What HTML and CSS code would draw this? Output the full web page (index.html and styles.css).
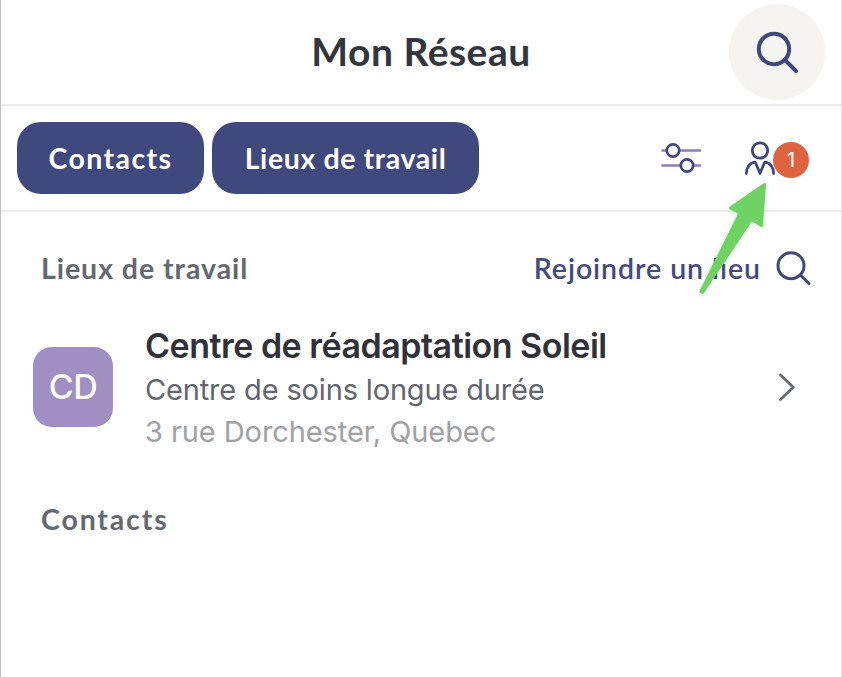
FILE: index.html
```html
<!DOCTYPE html>
<html lang="fr">
<head>
<meta charset="utf-8">
<title>Mon Réseau</title>
<link rel="stylesheet" href="styles.css">
</head>
<body>
<main class="screen">
  <header class="topbar">
    <h1 class="title">Mon Réseau</h1>
    <button class="round-search" aria-label="Rechercher">
      <svg width="44" height="44" viewBox="755 30 44 44" fill="none" stroke="#3f487c" stroke-width="4" stroke-linecap="round"><circle cx="774" cy="49" r="15.2"/><path d="M785.5 60.5 796 71"/></svg>
    </button>
  </header>
  <nav class="filters">
    <button class="pill pill-contacts"><span class="pill-text-a">Contacts</span></button>
    <button class="pill pill-places"><span class="pill-text-b">Lieux de travail</span></button>
    <svg class="sliders" width="42" height="34" viewBox="660 141 42 34" fill="none" stroke-width="2.7" stroke-linecap="round">
      <path stroke="#8b7fb5" d="M662.5 150.5H700M662.5 165.5H700"/>
      <circle cx="673" cy="150.500" r="6.200" stroke="#3f487c" fill="#fff"/>
      <circle cx="687" cy="165.500" r="6.200" stroke="#3f487c" fill="#fff"/>
    </svg>
    <div class="people">
      <svg class="person" width="34" height="40" viewBox="744 139 34 40" fill="none" stroke="#3f487c" stroke-width="2.8" stroke-linecap="round" stroke-linejoin="round"><circle cx="760" cy="150.500" r="7.700"/><path d="M746.400 173.500C746.400 167 750 162.600 755.300 162.200L760 173.200 764.700 162.200C770 162.600 773.600 167 773.600 173.500"/></svg>
      <span class="badge">1</span>
    </div>
  </nav>
  <section class="content">
    <div class="section-head">
      <h2 class="label label-places">Lieux de travail</h2>
      <a class="join"><span>Rejoindre un lieu</span>
        <svg width="38" height="38" viewBox="775 250 38 38" fill="none" stroke="#3f487c" stroke-width="3" stroke-linecap="round"><circle cx="791" cy="265.700" r="13"/><path d="M800.500 275.200 809 283.500"/></svg>
      </a>
    </div>
    <article class="place">
      <div class="avatar">CD</div>
      <div class="details">
        <h3 class="name">Centre de réadaptation Soleil</h3>
        <p class="kind">Centre de soins longue durée</p>
        <p class="address">3 rue Dorchester, Quebec</p>
      </div>
      <svg class="chevron" width="20" height="32" viewBox="777 371 20 32" fill="none" stroke="#676b70" stroke-width="2.800" stroke-linecap="round" stroke-linejoin="round"><path d="M780.500 375 793.300 387.200 780.500 399.500"/></svg>
    </article>
    <h2 class="label label-contacts">Contacts</h2>
  </section>
  <svg class="arrow" width="90" height="126" viewBox="690 175 90 126"><path fill="#6fd364" stroke="#6fd364" stroke-width="3" stroke-linejoin="round" d="M764.500 184.500 730.500 208 740 212.800 701 291.500 702.500 292.500 751.500 219.500 761.500 225.500Z"/></svg>
</main>
</body>
</html>
```
FILE: styles.css
```css
* { box-sizing: border-box; margin: 0; }
body { background: #fff; }
button { border: 0; padding: 0; font: inherit; }
svg { display: block; flex: none; }
.screen {
  position: relative;
  width: 842px;
  height: 677px;
  overflow: hidden;
  border-left: 1px solid #c4c4c6;
  border-right: 1px solid #e2e2e4;
  background: #fefefe;
  font-family: Lato, "Liberation Sans", sans-serif;
  white-space: nowrap;
}
.topbar {
  display: grid;
  grid-template-columns: 1fr auto 1fr;
  align-items: center;
  height: 106px;
  padding: 0 16px;
  border-bottom: 2px solid #ececee;
}
.title { grid-column: 2; margin-bottom: 2px; font-size: 39px; line-height: 48px; font-weight: 700; letter-spacing: 0.5px; color: #33363d; }
.round-search {
  justify-self: end;
  display: grid;
  place-items: center;
  width: 96px;
  height: 96px;
  border-radius: 50%;
  background: #f5f4f1;
}
.filters {
  display: flex;
  align-items: center;
  height: 106px;
  padding: 0 32px 0 16px;
  border-bottom: 2px solid #ececee;
}
.pill {
  height: 72px;
  border-radius: 24px;
  background: #40497d;
  color: #fff;
  font-size: 28.500px;
  font-weight: 700;
}
.pill-contacts { width: 187px; margin-right: 8px; }
.pill-places { width: 267px; }
.pill-text-a { letter-spacing: 1.4px; }
.pill-text-b { letter-spacing: 0.6px; }
.sliders { margin: 0 42px 0 auto; }
.people { display: flex; align-items: center; }
.person { margin-top: 2px; }
.badge {
  display: grid;
  place-items: center;
  width: 36px;
  height: 36px;
  margin-left: -5px;
  margin-top: 4px;
  border-radius: 50%;
  background: #df6340;
  color: #fff;
  font: 400 20px Inter, sans-serif;
}
.section-head {
  display: flex;
  align-items: center;
  justify-content: space-between;
  height: 38px;
  margin-top: 38px;
  padding: 0 28px 0 40px;
}
.label { font-size: 28.500px; line-height: 36px; font-weight: 700; letter-spacing: 0.95px; color: #646970; }
.label-places { margin-bottom: 2px; }
.join { display: flex; align-items: center; gap: 14px; color: #434b80; font-size: 28.500px; line-height: 36px; font-weight: 600; letter-spacing: 0.95px; }
.join span { margin-bottom: 2px; }
.place { display: flex; align-items: center; height: 128px; margin-top: 35px; padding: 0 44px 0 32px; font-family: Inter, sans-serif; }
.avatar { display: grid; place-items: center; width: 80px; height: 80px; padding-bottom: 1px; border-radius: 19px; background: #a08fc3; color: #fff; font-size: 34px; letter-spacing: -0.5px; font-weight: 500; }
.details { margin: 2px 0 0 32px; }
.name { font-size: 34px; line-height: 44px; font-weight: 600; letter-spacing: -0.5px; color: #303238; }
.kind { font-size: 29px; line-height: 43px; letter-spacing: -0.16px; color: #63676d; }
.address { font-size: 29px; line-height: 41px; letter-spacing: -0.08px; color: #a0a1a4; }
.chevron { margin-left: auto; }
.label-contacts { margin: 50px 0 0 40px; letter-spacing: 1.85px; }
.arrow { position: absolute; left: 689px; top: 175px; filter: drop-shadow(0 1px 2px rgba(0,0,0,.12)); }
```
